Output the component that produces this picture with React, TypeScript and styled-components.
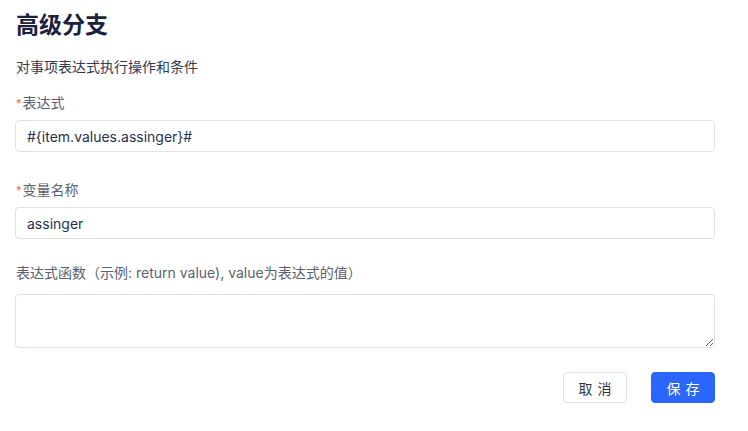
import React from 'react';
import styled, { createGlobalStyle } from 'styled-components';

const GlobalStyle = createGlobalStyle`
  html, body {
    margin: 0;
    padding: 0;
    background: #ffffff;
  }
  body {
    font-family: "Inter", "Noto Sans CJK SC", "Noto Sans", sans-serif;
    -webkit-font-smoothing: antialiased;
  }
`;

const Panel = styled.div`
  width: 700px;
  padding: 10px 0 0 15px;
  box-sizing: content-box;
`;

const Title = styled.h1`
  margin: 0 0 0 1px;
  font-size: 23px;
  line-height: 30px;
  font-weight: 700;
  color: #1b2240;
`;

const Description = styled.p`
  margin: 16px 0 14px 1px;
  font-size: 14px;
  line-height: 22px;
  color: #333a4d;
`;

const Field = styled.div<{ $gap?: number }>`
  display: flex;
  flex-direction: column;
  margin-bottom: ${(p) => p.$gap ?? 27}px;
`;

const Label = styled.label<{ $space?: number }>`
  display: flex;
  align-items: center;
  margin: 0 0 ${(p) => p.$space ?? 6}px 1px;
  font-size: 14px;
  line-height: 22px;
  color: #5c6170;
`;

const Star = styled.span`
  color: #f5603c;
  font-size: 11px;
  margin-right: 1px;
`;

const Input = styled.input`
  height: 32px;
  box-sizing: border-box;
  padding: 0 11px;
  border: 1px solid #dfe1e8;
  border-radius: 4px;
  font-family: inherit;
  font-size: 14px;
  color: #283250;
  outline: none;
`;

const TextArea = styled.textarea`
  height: 54px;
  box-sizing: border-box;
  padding: 6px 11px;
  border: 1px solid #dfe1e8;
  border-radius: 4px;
  font-family: inherit;
  font-size: 14px;
  color: #283250;
  outline: none;
  resize: vertical;
`;

const Actions = styled.div`
  display: flex;
  justify-content: flex-end;
  gap: 24px;
`;

const Button = styled.button<{ $primary?: boolean }>`
  width: 64px;
  height: 31px;
  box-sizing: border-box;
  border-radius: 4px;
  border: 1px solid ${(p) => (p.$primary ? '#2b66fb' : '#dcdfe6')};
  background: ${(p) => (p.$primary ? '#2b66fb' : '#ffffff')};
  color: ${(p) => (p.$primary ? '#ffffff' : '#2f3548')};
  font-family: inherit;
  font-size: 14px;
  letter-spacing: 5px;
  padding: 0 0 0 5px;
  cursor: pointer;
`;

export default function App() {
  return (
    <>
      <GlobalStyle />
      <Panel>
        <Title>高级分支</Title>
        <Description>对事项表达式执行操作和条件</Description>
        <Field>
          <Label>
            <Star>*</Star>表达式
          </Label>
          <Input defaultValue="#{item.values.assinger}#" />
        </Field>
        <Field $gap={23}>
          <Label>
            <Star>*</Star>变量名称
          </Label>
          <Input defaultValue="assinger" />
        </Field>
        <Field $gap={24}>
          <Label $space={10}>表达式函数（示例: return value), value为表达式的值）</Label>
          <TextArea />
        </Field>
        <Actions>
          <Button>取消</Button>
          <Button $primary>保存</Button>
        </Actions>
      </Panel>
    </>
  );
}
